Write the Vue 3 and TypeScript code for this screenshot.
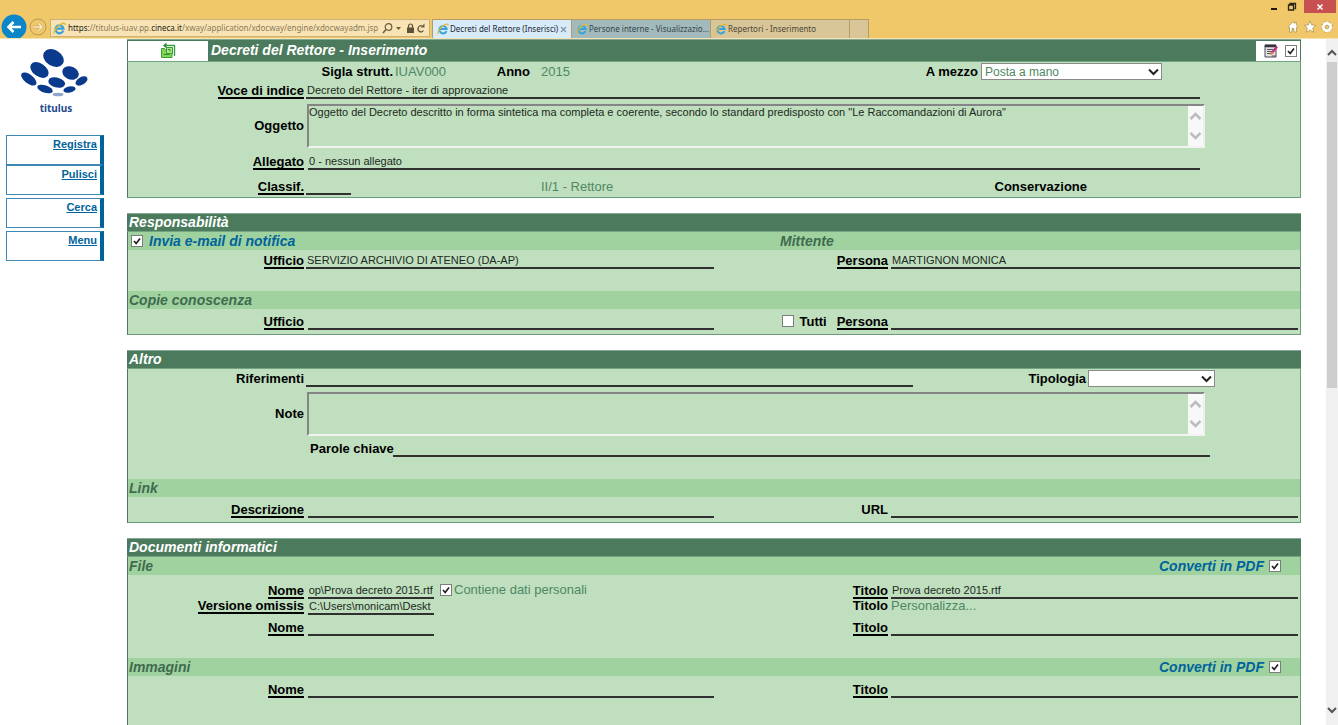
<script setup lang="ts">
import { onMounted, ref } from 'vue'

interface Tab {
  title: string
  state: 'active' | 'visited' | 'idle'
}

const tabs: Tab[] = [
  { title: 'Decreti del Rettore (Inserisci)', state: 'active' },
  { title: 'Persone interne - Visualizzazio...', state: 'visited' },
  { title: 'Repertori - Inserimento', state: 'idle' },
]

const fileName = ref<HTMLInputElement | null>(null)

// A long path shows its end, where the file name is.
onMounted(() => {
  if (fileName.value) fileName.value.scrollLeft = fileName.value.scrollWidth
})
</script>

<template>
  <div class="window">
    <header class="chrome">
      <div class="titlebar">
        <button class="win" aria-label="Riduci a icona">
          <svg width="10" height="12" viewBox="0 0 10 12"><path d="M2 8h6" stroke="#1f1a10" stroke-width="2" /></svg>
        </button>
        <button class="win" aria-label="Ripristina">
          <svg width="10" height="12" viewBox="0 0 10 12"><path d="M3 3.500V2.500H8.500V7.500H7.500M1.500 4H6.500V9H1.500Z" fill="none" stroke="#2b2414" stroke-width="1.300" /></svg>
        </button>
        <button class="win close" aria-label="Chiudi">
          <svg width="8" height="8" viewBox="0 0 8 8"><path d="M1.500 1.500l5 5M6.500 1.500l-5 5" stroke="#fff" stroke-width="1.500" /></svg>
        </button>
      </div>
      <div class="navbar">
        <button class="round back" aria-label="Indietro">
          <svg width="28" height="24" viewBox="0 0 28 24">
            <circle cx="14" cy="13" r="12.500" fill="#0b86c9" />
            <path d="M21 13H9M13.500 8L8.500 13l5 5" fill="none" stroke="#fff" stroke-width="2.600" />
          </svg>
        </button>
        <button class="round" aria-label="Avanti">
          <svg width="20" height="24" viewBox="0 0 20 24">
            <circle cx="10" cy="13" r="8" fill="none" stroke="#b59a58" stroke-width="1" />
            <path d="M5.500 13H14M10.500 9.500L14 13l-3.500 3.500" fill="none" stroke="#c9ac66" stroke-width="2.800" />
            <path d="M5.500 13H14M10.500 9.500L14 13l-3.500 3.500" fill="none" stroke="#fbe9bf" stroke-width="1.500" />
          </svg>
        </button>
        <div class="address">
          <svg class="ie" width="13" height="13" viewBox="0 0 13 13">
            <path d="M10.300 8.700A4 4 0 1 1 10.500 6.600H3.500" fill="none" stroke="#36a3dc" stroke-width="2.200" />
            <path d="M1.300 12C.2 10.500 3 5.500 6.500 3S12.500 .8 12 3.200" fill="none" stroke="#e8b92c" stroke-width="1.300" />
          </svg>
          <span class="url">https:<i>//titulus-iuav.pp.</i>cineca.it<i>/xway/application/xdocway/engine/xdocwayadm.jsp</i></span>
          <svg width="44" height="13" viewBox="0 0 44 13">
            <circle cx="6.500" cy="5" r="3.300" fill="none" stroke="#6b5c3c" stroke-width="1.200" />
            <path d="M4 7.500L1 11" stroke="#6b5c3c" stroke-width="1.500" />
            <path d="M14 5h5l-2.500 3z" fill="#6b5c3c" />
            <path d="M25 5.500h7V11h-7z" fill="#5e5338" />
            <path d="M26.500 6V4a2 2 0 0 1 4 0v2" fill="none" stroke="#5e5338" stroke-width="1.200" />
            <path d="M41.500 8.500A3 3 0 1 1 40.500 4.200" fill="none" stroke="#6b5c3c" stroke-width="1.300" />
            <path d="M42.500 1.500v4h-4z" fill="#6b5c3c" />
          </svg>
        </div>
        <nav class="tabs" aria-label="Schede">
          <a v-for="t in tabs" :key="t.title" href="#" class="tab" :class="t.state">
            <svg class="ie" width="12" height="12" viewBox="0 0 13 13">
              <path d="M10.300 8.700A4 4 0 1 1 10.500 6.600H3.500" fill="none" stroke="#36a3dc" stroke-width="2.200" />
              <path d="M1.300 12C.2 10.500 3 5.500 6.500 3S12.500 .8 12 3.200" fill="none" stroke="#e8b92c" stroke-width="1.300" />
            </svg>
            <span class="tab-title">{{ t.title }}</span>
            <svg v-if="t.state === 'active'" width="7" height="7" viewBox="0 0 7 7"><path d="M1 1l5 5M6 1L1 6" stroke="#8293a3" stroke-width="1.200" /></svg>
          </a>
          <button class="new-tab" aria-label="Nuova scheda"></button>
        </nav>
        <div class="tools">
          <svg width="46" height="14" viewBox="0 0 46 14" fill="#fff" stroke="#a78c4c" stroke-width=".7">
            <path d="M.8 7L6 1.800l1.800 1.700V2.300h1.600v2.800L11.200 7l-.8.900-.9-.8V12H7V8.500H5V12H2.500V7.100l-.9.800z" />
            <path d="M23 1l1.700 3.900 4.200.4-3.200 2.800 1 4.200L23 10l-3.700 2.300 1-4.200-3.200-2.800 4.200-.4z" />
            <circle cx="40" cy="7" r="4.700" stroke="#a78c4c" stroke-width="2.400" stroke-dasharray="2 1.700" />
            <circle cx="40" cy="7" r="3.500" fill="none" stroke="#fff" stroke-width="2.400" />
            <circle cx="40" cy="7" r="4.800" fill="none" stroke="#fff" stroke-width="1.500" stroke-dasharray="2 1.700" />
            <circle cx="40" cy="7" r="1.900" fill="#efc768" />
          </svg>
        </div>
      </div>
    </header>

    <div class="page">
      <aside class="sidebar">
        <div class="logo">
          <svg width="70" height="50" viewBox="18 47 70 50" fill="#0a3a8c">
            <ellipse cx="52.500" cy="58" rx="11" ry="8" transform="rotate(32 52.500 58)" />
            <ellipse cx="38.500" cy="70" rx="10.200" ry="6.500" transform="rotate(35 38.500 70)" />
            <ellipse cx="69.500" cy="73" rx="8.500" ry="6.500" transform="rotate(22 69.500 73)" />
            <ellipse cx="27.800" cy="79" rx="9" ry="4.500" transform="rotate(38 27.800 79)" />
            <ellipse cx="55.700" cy="82.500" rx="8.500" ry="5" transform="rotate(14 55.700 82.500)" />
            <ellipse cx="80.500" cy="81" rx="6.500" ry="3.800" transform="rotate(-30 80.500 81)" />
            <ellipse cx="44" cy="89" rx="8" ry="3.700" transform="rotate(18 44 89)" />
            <ellipse cx="68.500" cy="89.500" rx="6.200" ry="3" transform="rotate(-12 68.500 89.500)" />
            <ellipse cx="57" cy="94.500" rx="5.500" ry="1.800" fill="#8fa6cb" />
          </svg>
          <span>titulus</span>
        </div>
        <nav class="menu" aria-label="Azioni">
          <div class="menu-pair">
            <div class="menu-item"><a href="#">Registra</a></div>
            <div class="menu-item"><a href="#">Pulisci</a></div>
          </div>
          <div class="menu-item"><a href="#">Cerca</a></div>
          <div class="menu-item"><a href="#">Menu</a></div>
        </nav>
      </aside>

      <main class="content">
        <section class="panel">
          <div class="head tall">
            <div class="box left-box">
              <svg width="16" height="17" viewBox="0 0 16 17">
                <path d="M4 3.500H14.500V14" fill="none" stroke="#3f9a4a" stroke-width="1.400" />
                <path d="M6.500 .5L3 3.500l3.500 3z" fill="#2f8a3c" />
                <path d="M1.500 6.500h3l1 1.500h6.500v7.500H1.500z" fill="#7ed957" stroke="#3f9a3a" />
                <path d="M6.500 5.500h6v6h-6z" fill="#a5e884" stroke="#3f9a3a" />
                <path d="M8 7.500h2v2" fill="none" stroke="#358a30" />
                <path d="M3.500 12.500h6" stroke="#358a30" />
              </svg>
            </div>
            <h1>Decreti del Rettore - Inserimento</h1>
            <div class="box right-box">
              <svg width="15" height="14" viewBox="0 0 15 14">
                <path d="M1 1h11v12H1z" fill="#e4e4e8" stroke="#4a4a52" />
                <path d="M1 2h11" stroke="#33333b" stroke-width="2.500" />
                <path d="M3 5.500h6M3 7.500h5M3 9.500h4M8 12h4" stroke="#55555d" />
                <path d="M7.500 9.500L13 2.500" stroke="#c2307c" stroke-width="2.400" />
                <path d="M6.800 10.800l1.900-2.800" stroke="#e78a3c" stroke-width="2" />
              </svg>
              <input type="checkbox" class="check" aria-label="Seleziona" checked />
            </div>
          </div>
          <div class="body pad-s">
            <div class="row quad h18">
              <span class="label"><b>Sigla strutt.</b></span>
              <span class="pair"><span class="value">IUAV000</span><b class="lbl">Anno</b></span>
              <span class="pair"><span class="value">2015</span><label class="lbl" for="mezzo">A mezzo</label></span>
              <select id="mezzo" class="select mezzo"><option>Posta a mano</option></select>
            </div>
            <div class="row wide h19">
              <span class="label"><label class="u" for="voce">Voce di indice</label></span>
              <input id="voce" class="line start-1 end-100" value="Decreto del Rettore - iter di approvazione" />
            </div>
            <div class="row wide mid area-row">
              <span class="label"><label for="oggetto">Oggetto</label></span>
              <div class="area">
                <textarea id="oggetto">Oggetto del Decreto descritto in forma sintetica ma completa e coerente, secondo lo standard predisposto con "Le Raccomandazioni di Aurora"</textarea>
                <svg width="15" height="40" viewBox="0 0 15 40"><path d="M0 0h15v40H0z" fill="#f8f8f8" /><path d="M2.500 13l5-5 5 5M2.500 27l5 5 5-5" fill="none" stroke="#bdbdbd" stroke-width="2.500" /></svg>
              </div>
            </div>
            <div class="row wide h22">
              <span class="label"><label class="u" for="allegato">Allegato</label></span>
              <input id="allegato" class="line start-3 end-100" value="0 - nessun allegato" />
            </div>
            <div class="row classif h25">
              <span class="label"><label class="u" for="classif">Classif.</label></span>
              <input id="classif" class="line start-1 short" />
              <span class="pair"><span class="value">II/1 - Rettore</span><b class="lbl">Conservazione</b></span>
            </div>
          </div>
        </section>

        <section class="panel">
          <div class="head"><h2>Responsabilità</h2></div>
          <div class="body pad-m">
            <div class="band notify">
              <label class="blue"><input type="checkbox" class="check" checked />Invia e-mail di notifica</label>
              <span>Mittente</span>
            </div>
            <div class="row four h19">
              <span class="label"><label class="u" for="uff1">Ufficio</label></span>
              <input id="uff1" class="line start-1" value="SERVIZIO ARCHIVIO DI ATENEO (DA-AP)" />
              <span class="label right"><label class="u" for="per1">Persona</label></span>
              <input id="per1" class="line" value="MARTIGNON MONICA" />
            </div>
            <div class="gap"></div>
            <div class="band"><span>Copie conoscenza</span></div>
            <div class="row four h21">
              <span class="label"><label class="u" for="uff2">Ufficio</label></span>
              <input id="uff2" class="line start-3" />
              <span class="label right all">
                <input id="tutti" type="checkbox" class="check" /><label for="tutti">Tutti</label><label class="u" for="per2">Persona</label>
              </span>
              <input id="per2" class="line end-2" />
            </div>
          </div>
        </section>

        <section class="panel">
          <div class="head"><h2>Altro</h2></div>
          <div class="body pad-m">
            <div class="row refs h18">
              <span class="label"><label for="rif">Riferimenti</label></span>
              <input id="rif" class="line start-1" />
              <label class="lbl" for="tipo">Tipologia</label>
              <select id="tipo" class="select tipo"><option></option></select>
            </div>
            <div class="row wide mid area-row">
              <span class="label"><label for="note">Note</label></span>
              <div class="area">
                <textarea id="note"></textarea>
                <svg width="15" height="40" viewBox="0 0 15 40"><path d="M0 0h15v40H0z" fill="#f8f8f8" /><path d="M2.500 13l5-5 5 5M2.500 27l5 5 5-5" fill="none" stroke="#bdbdbd" stroke-width="2.500" /></svg>
              </div>
            </div>
            <div class="row keys h21">
              <label class="lbl" for="parole">Parole chiave</label>
              <input id="parole" class="line" />
            </div>
            <div class="gap"></div>
            <div class="band"><span>Link</span></div>
            <div class="row four h21">
              <span class="label"><label class="u" for="desc">Descrizione</label></span>
              <input id="desc" class="line start-3" />
              <span class="label right"><label for="link-url">URL</label></span>
              <input id="link-url" class="line end-2" />
            </div>
          </div>
        </section>

        <section class="panel">
          <div class="head"><h2>Documenti informatici</h2></div>
          <div class="body pad-l">
            <div class="band">
              <span>File</span>
              <label class="blue pdf">Converti in PDF<input type="checkbox" class="check" checked /></label>
            </div>
            <div class="row four h24">
              <span class="label"><label class="u" for="nome1">Nome</label></span>
              <div class="file">
                <input id="nome1" ref="fileName" class="line path" value="C:\Users\monicam\Desktop\Prova decreto 2015.rtf" />
                <label class="personal"><input type="checkbox" class="check" checked />Contiene dati personali</label>
              </div>
              <span class="label right"><label class="u" for="tit1">Titolo</label></span>
              <input id="tit1" class="line end-2" value="Prova decreto 2015.rtf" />
            </div>
            <div class="row four top">
              <span class="label"><label class="u" for="omissis">Versione omissis</label></span>
              <div class="file"><input id="omissis" class="line path" value="C:\Users\monicam\Deskt" /></div>
              <span class="label right"><b>Titolo</b></span>
              <span class="value">Personalizza...</span>
            </div>
            <div class="row four h21">
              <span class="label"><label class="u" for="nome2">Nome</label></span>
              <div class="file"><input id="nome2" class="line path" /></div>
              <span class="label right"><label class="u" for="tit2">Titolo</label></span>
              <input id="tit2" class="line end-2" />
            </div>
            <div class="gap"></div>
            <div class="band">
              <span>Immagini</span>
              <label class="blue pdf">Converti in PDF<input type="checkbox" class="check" checked /></label>
            </div>
            <div class="row four h22">
              <span class="label"><label class="u" for="nome3">Nome</label></span>
              <input id="nome3" class="line start-3" />
              <span class="label right"><label class="u" for="tit3">Titolo</label></span>
              <input id="tit3" class="line end-2" />
            </div>
          </div>
        </section>
      </main>

      <div class="scrollbar" aria-hidden="true">
        <svg width="12" height="23" viewBox="0 0 12 23"><path d="M2 16l4-4 4 4" fill="none" stroke="#555" stroke-width="2" /></svg>
        <div class="track"><div class="thumb"></div></div>
        <svg width="12" height="23" viewBox="0 0 12 23"><path d="M2 6l4 4 4-4" fill="none" stroke="#555" stroke-width="2" /></svg>
      </div>
    </div>
  </div>
</template>

<style>
body {
  margin: 0;
  background: #fff;
}
</style>

<style scoped>
* {
  box-sizing: border-box;
}

.window {
  display: flex;
  flex-direction: column;
  height: 100vh;
  overflow: hidden;
  font-family: "Liberation Sans", Arial, sans-serif;
  font-size: 13px;
  color: #000;
}

button {
  border: 0;
  padding: 0;
  background: none;
}

svg {
  display: block;
  flex: none;
}

/* browser frame */
.chrome {
  flex: none;
  background: #f0c869;
  border-bottom: 1px solid #f6e3b4;
  font-family: "Noto Sans", "Open Sans", sans-serif;
}

.titlebar {
  display: flex;
  justify-content: flex-end;
  height: 14px;
  padding-right: 2px;
  gap: 8px;
}

.win {
  display: flex;
  align-items: center;
  justify-content: center;
}

.win.close {
  width: 32px;
  height: 13px;
  margin-left: -1px;
  background: #c75050;
}

.navbar {
  display: flex;
  height: 24px;
  align-items: flex-end;
}

.address {
  flex: none;
  display: flex;
  align-items: center;
  width: 380px;
  height: 18px;
  margin: 0 2px 1px;
  padding: 0 3px 0 2px;
  gap: 2px;
  background: #f8e3b4;
  border: 1px solid #cbb277;
}

.url {
  flex: 1;
  font-size: 8px;
  line-height: 14px;
  white-space: nowrap;
  color: #2a2415;
}

.url i {
  font-style: normal;
  color: #8a7a55;
}

.tabs {
  display: flex;
  height: 19px;
  border: 1px solid #b59c63;
  border-bottom: 0;
}

.tab {
  display: flex;
  align-items: center;
  width: 139px;
  padding: 0 4px;
  gap: 1px;
  border-right: 1px solid #b59c63;
  background: #d8c699;
  color: #4d4533;
  font-size: 8px;
  line-height: 14px;
  text-decoration: none;
  white-space: nowrap;
}

.tab-title {
  flex: 1;
}

.tab.active {
  background: #d8ebfb;
  color: #1d2730;
}

.tab.visited {
  background: #a2babb;
  color: #34454c;
}

.new-tab {
  width: 18px;
  background: #d8c699;
}

.tools {
  margin-left: auto;
  padding: 0 5px 4px 0;
}

/* page frame */
.page {
  flex: 1;
  display: flex;
  min-height: 0;
}

.sidebar {
  flex: none;
  width: 127px;
}

.logo {
  display: flex;
  flex-direction: column;
  align-items: center;
  width: 112px;
  height: 96px;
  padding-top: 8px;
  gap: 3px;
  font: bold 10px/16px "Noto Sans", "Open Sans", sans-serif;
  color: #1f4a8c;
}

.logo svg {
  margin-right: 4px;
}

.menu {
  display: flex;
  flex-direction: column;
  gap: 3px;
  width: 98px;
  margin-left: 6px;
}

.menu-item {
  height: 30px;
  padding: 1px 3px 0 0;
  border: 1px solid #3f88b5;
  border-right: 4px solid #00639c;
  text-align: right;
  font-weight: bold;
  font-size: 11px;
  line-height: 14px;
}

.menu-item a {
  color: #00639c;
}

.content {
  flex: 1;
  min-width: 0;
  margin-right: 25px;
}

.scrollbar {
  flex: none;
  display: flex;
  flex-direction: column;
  width: 12px;
  background: #f0f0f0;
}

.track {
  flex: 1;
  padding: 0 1px;
}

.thumb {
  height: 51%;
  background: #cdcdcd;
}

/* panels */
.panel {
  margin-bottom: 15px;
}

.head {
  display: flex;
  align-items: center;
  height: 19px;
  padding-left: 2px;
  background: #4b7b5c;
  border-top: 1px solid #86a892;
  border-bottom: 1px solid #74a583;
}

.head.tall {
  height: 23px;
  padding: 0 1px;
}

h1,
h2 {
  margin: 0;
  font-size: 14px;
  line-height: 17px;
  font-style: italic;
  color: #fff;
}

h1 {
  flex: 1;
  padding-left: 3px;
}

.box {
  display: flex;
  align-items: center;
  height: 20px;
  background: #fff;
}

.left-box {
  justify-content: center;
  width: 80px;
}

.right-box {
  width: 44px;
  gap: 6px;
  padding-left: 8px;
}

.body {
  background: #bfdfbf;
  border: 1px solid #6a9c7a;
  border-top: 0;
  border-left-color: #4b7b5c;
}

.pad-s {
  padding-bottom: 2px;
}

.pad-m {
  padding-bottom: 4px;
}

.pad-l {
  padding-bottom: 40px;
}

.band {
  display: flex;
  align-items: center;
  justify-content: space-between;
  height: 18px;
  padding: 0 19px 0 1px;
  background: #9fd29f;
  color: #3f6b4f;
  font-size: 14px;
  line-height: 17px;
  font-style: italic;
  font-weight: bold;
}

.band.notify {
  display: grid;
  grid-template-columns: 652px 1fr;
  padding-left: 0;
}

.blue {
  display: flex;
  align-items: center;
  gap: 6px;
  padding-left: 3px;
  color: #00639c;
}

.pdf {
  gap: 5px;
}

.gap {
  height: 22px;
}

/* rows */
.row {
  display: grid;
  align-items: end;
}

.row.wide {
  grid-template-columns: 177px 1fr;
}

.row.four {
  grid-template-columns: 177px 1fr 177px 1fr;
}

.row.quad {
  grid-template-columns: 266px 137px 1fr 321px;
}

.row.classif {
  grid-template-columns: 177px 226px 1fr;
}

.row.refs {
  grid-template-columns: 177px 1fr 175px 212px;
}

.row.keys {
  grid-template-columns: 81px 1fr;
  gap: 2px;
  padding: 0 90px 0 182px;
}

.row.mid {
  align-items: center;
}

.row.top {
  align-items: start;
}

.h18 { height: 18px; }
.h19 { height: 19px; }
.h21 { height: 21px; }
.h22 { height: 22px; }
.h24 { height: 24px; }
.h25 { height: 25px; }

.area-row {
  padding-top: 5px;
}

.label {
  display: flex;
  justify-content: flex-end;
  padding-right: 1px;
}

.label.right {
  padding-right: 3px;
}

.label > *,
.lbl {
  font-weight: bold;
  line-height: 13px;
  white-space: nowrap;
  border-bottom: 2px solid transparent;
}

.label > .u {
  border-bottom-color: #000;
}

.label.all {
  align-items: flex-end;
}

.label.all .check {
  margin: 0 6px 3px 0;
  border: 1px solid #7d7d7d;
}

.label.all .u {
  margin-left: 10px;
}

.refs .lbl {
  text-align: right;
  padding-right: 2px;
}

.pair {
  display: flex;
  justify-content: space-between;
  padding: 0 1px;
}

.pair + .pair,
.classif .pair {
  padding-left: 10px;
}

.classif .pair {
  padding-right: 213px;
}

.value {
  color: #4f8763;
  line-height: 13px;
  border-bottom: 2px solid transparent;
  white-space: nowrap;
}

.line {
  display: block;
  min-width: 0;
  height: 16px;
  padding: 0 1px;
  border: 0;
  border-bottom: 2px solid #303030;
  border-radius: 0;
  outline: 0;
  background: transparent;
  font: 11px "Liberation Sans", Arial, sans-serif;
  color: #1c2a20;
}

.start-1 { margin-left: 1px; }
.start-3 { margin-left: 3px; }
.end-2 { margin-right: 2px; }
.end-100 { margin-right: 100px; }

.line.short {
  width: 45px;
}

.file {
  display: flex;
  align-items: flex-start;
  gap: 6px;
  padding-left: 3px;
}

.path {
  width: 126px;
}

.personal {
  display: flex;
  align-items: center;
  gap: 2px;
  color: #4f8763;
  line-height: 13px;
  white-space: nowrap;
}

.area {
  display: flex;
  height: 44px;
  margin: 0 95px 0 2px;
  border: 2px solid;
  border-color: #858585 #eaf2ea #f2f2f2 #858585;
}

.area textarea {
  flex: 1;
  min-width: 0;
  padding: 0;
  border: 0;
  outline: 0;
  resize: none;
  overflow: hidden;
  background: transparent;
  font: 11px/13px "Liberation Sans", Arial, sans-serif;
  color: #1c2a20;
}

.select {
  appearance: none;
  height: 17px;
  padding: 0 3px;
  border: 1px solid #8a8a8a;
  border-radius: 0;
  background: #fff url("data:image/svg+xml,%3Csvg xmlns='http://www.w3.org/2000/svg' width='11' height='8' viewBox='0 0 11 8'%3E%3Cpath d='M1 1.500l4.500 4.500L10 1.500' fill='none' stroke='%23222' stroke-width='2'/%3E%3C/svg%3E") no-repeat right 2px center;
  font: 12px "Liberation Sans", Arial, sans-serif;
  color: #4f8763;
}

.mezzo {
  width: 181px;
  margin-left: 2px;
}

.tipo {
  width: 127px;
}

.check {
  appearance: none;
  flex: none;
  width: 12px;
  height: 12px;
  margin: 0;
  border: 1px solid #7d7d7d;
  background: #fff;
}

.check:checked {
  background: #fff url("data:image/svg+xml,%3Csvg xmlns='http://www.w3.org/2000/svg' width='10' height='10' viewBox='0 0 10 10'%3E%3Cpath d='M2 5l2.200 2.500L8 2.500' fill='none' stroke='%23222' stroke-width='1.700'/%3E%3C/svg%3E") no-repeat center;
}
</style>
